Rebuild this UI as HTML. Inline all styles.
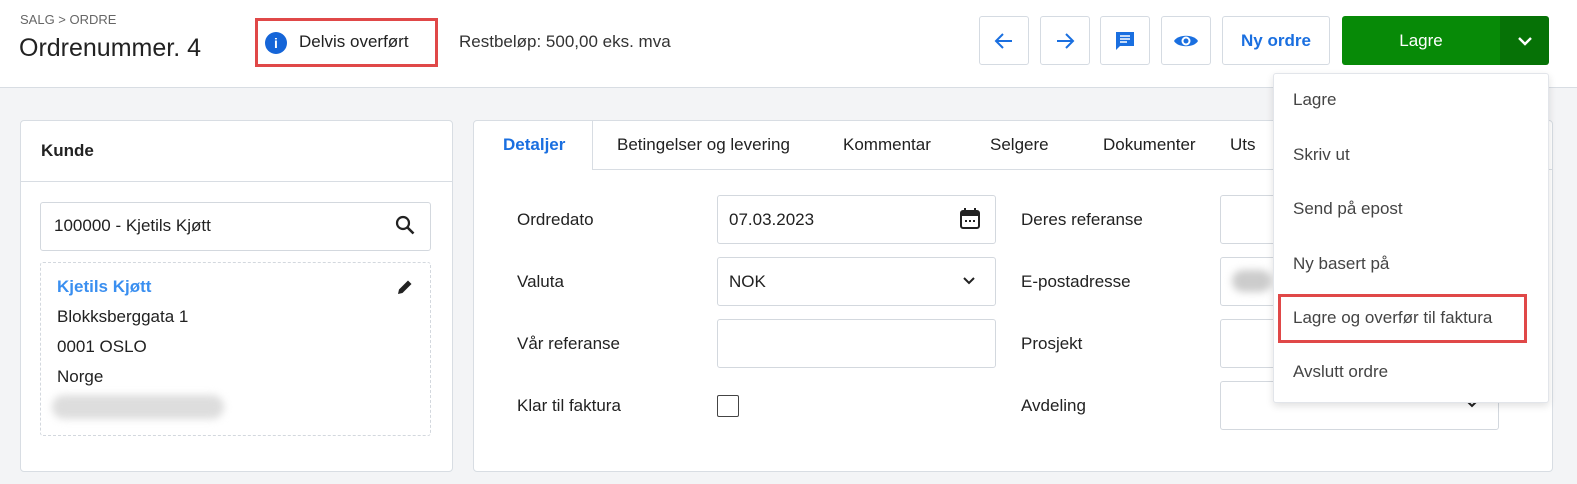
<!DOCTYPE html>
<html><head><meta charset="utf-8"><style>
*{box-sizing:border-box;margin:0;padding:0}
body{width:1577px;height:484px;background:#f3f4f6;font-family:"Liberation Sans",sans-serif;color:#212121;position:relative;overflow:hidden;font-size:17px}
.abs{position:absolute}
.hdr{left:0;top:0;width:1577px;height:88px;background:#fff;border-bottom:1px solid #d8dde3}
.btn{position:absolute;top:16px;height:49px;border:1px solid #d5dbe2;border-radius:3px;background:#fff;display:flex;align-items:center;justify-content:center}
.card{background:#fff;border:1px solid #d8dde3;border-radius:4px;position:absolute}
.inp{position:absolute;border:1px solid #d3d8de;border-radius:3px;background:#fff;height:49px}
.lbl{position:absolute;font-size:17px;color:#222}
.mi{position:absolute;left:1293px;font-size:17px;color:#444}
</style></head><body>
<div class="abs hdr"></div>
<div class="abs" style="left:20px;top:12px;font-size:13px;color:#666">SALG &gt; ORDRE</div>
<div class="abs" style="left:19px;top:34px;font-size:25px;color:#222">Ordrenummer. 4</div>
<div class="abs" style="left:255px;top:18px;width:183px;height:49px;border:3px solid #e04848"></div>
<div class="abs" style="left:265px;top:32px;width:22px;height:22px;border-radius:50%;background:#1565d8;color:#fff;font-size:14px;font-weight:bold;text-align:center;line-height:22px">i</div>
<div class="abs" style="left:299px;top:32px;font-size:17px">Delvis overført</div>
<div class="abs" style="left:459px;top:32px;font-size:17px;color:#333">Restbeløp: 500,00 eks. mva</div>

<div class="btn" style="left:979px;width:50px"><svg width="24" height="24" viewBox="0 0 24 24"><path d="M20 12H5M11 5l-7 7 7 7" stroke="#1a6fe0" stroke-width="2" fill="none"/></svg></div>
<div class="btn" style="left:1040px;width:50px"><svg width="24" height="24" viewBox="0 0 24 24"><path d="M4 12h15M13 5l7 7-7 7" stroke="#1a6fe0" stroke-width="2" fill="none"/></svg></div>
<div class="btn" style="left:1100px;width:50px"><svg width="24" height="24" viewBox="0 0 24 24"><path d="M3 3h18v14H7l-4 4z" fill="#1a6fe0"/><path d="M7 7h10M7 10h10M7 13h7" stroke="#fff" stroke-width="1.6"/></svg></div>
<div class="btn" style="left:1161px;width:50px"><svg width="26" height="24" viewBox="0 0 26 24"><path d="M1 12C5 5 21 5 25 12C21 19 5 19 1 12z" fill="#1a6fe0"/><circle cx="13" cy="12" r="4.5" fill="#fff"/><circle cx="13" cy="12" r="2.5" fill="#1a6fe0"/></svg></div>
<div class="btn" style="left:1222px;width:108px;color:#1a6fe0;font-size:17px;font-weight:bold">Ny ordre</div>
<div class="abs" style="left:1342px;top:16px;width:158px;height:49px;background:#078a07;border-radius:3px 0 0 3px;color:#fff;font-size:17px;display:flex;align-items:center;justify-content:center">Lagre</div>
<div class="abs" style="left:1500px;top:16px;width:49px;height:49px;background:#067206;border-radius:0 3px 3px 0;display:flex;align-items:center;justify-content:center"><svg width="18" height="18" viewBox="0 0 18 18"><path d="M3 6l6 6 6-6" stroke="#fff" stroke-width="2.4" fill="none"/></svg></div>

<div class="card" style="left:20px;top:120px;width:433px;height:352px">
 <div style="height:61px;border-bottom:1px solid #d8dde3;padding:20px 0 0 20px;font-size:17px;font-weight:bold;color:#222">Kunde</div>
</div>
<div class="inp" style="left:40px;top:202px;width:391px;height:49px"></div>
<div class="abs" style="left:54px;top:216px;font-size:17px">100000 - Kjetils Kjøtt</div>
<svg class="abs" style="left:393px;top:213px" width="24" height="24" viewBox="0 0 24 24"><circle cx="10" cy="10" r="6" stroke="#222" stroke-width="2.2" fill="none"/><path d="M14.5 14.5l6 6" stroke="#222" stroke-width="2.6"/></svg>
<div class="abs" style="left:40px;top:262px;width:391px;height:174px;border:1px dashed #d3d8de;border-radius:3px"></div>
<div class="abs" style="left:57px;top:277px;font-size:17px;color:#3a8ff0;font-weight:bold">Kjetils Kjøtt</div>
<svg class="abs" style="left:396px;top:278px" width="18" height="18" viewBox="0 0 18 18"><path d="M2 16l1-4.5 9-9 3.5 3.5-9 9z" fill="#222"/></svg>
<div class="abs" style="left:57px;top:307px">Blokksberggata 1</div>
<div class="abs" style="left:57px;top:337px">0001 OSLO</div>
<div class="abs" style="left:57px;top:367px">Norge</div>
<div class="abs" style="left:52px;top:395px;width:172px;height:24px;border-radius:12px;background:#ddd;filter:blur(4px)"></div>

<div class="card" style="left:473px;top:120px;width:1080px;height:352px"></div>
<div class="abs" style="left:592px;top:121px;width:960px;height:49px;border-left:1px solid #d8dde3;border-bottom:1px solid #d8dde3"></div>
<div class="abs" style="left:503px;top:135px;color:#1a6fe0;font-weight:bold;font-size:17px">Detaljer</div>
<div class="abs" style="left:617px;top:135px">Betingelser og levering</div>
<div class="abs" style="left:843px;top:135px">Kommentar</div>
<div class="abs" style="left:990px;top:135px">Selgere</div>
<div class="abs" style="left:1103px;top:135px">Dokumenter</div>
<div class="abs" style="left:1230px;top:135px">Uts</div>

<div class="lbl" style="left:517px;top:210px">Ordredato</div>
<div class="lbl" style="left:517px;top:272px">Valuta</div>
<div class="lbl" style="left:517px;top:334px">Vår referanse</div>
<div class="lbl" style="left:517px;top:396px">Klar til faktura</div>
<div class="inp" style="left:717px;top:195px;width:279px"></div>
<div class="abs" style="left:729px;top:210px">07.03.2023</div>
<svg class="abs" style="left:959px;top:207px" width="22" height="24" viewBox="0 0 22 24"><rect x="2" y="4" width="18" height="17" rx="2" stroke="#222" stroke-width="2" fill="none"/><rect x="2" y="4" width="18" height="5" fill="#222"/><path d="M6 1v5M16 1v5" stroke="#222" stroke-width="2"/><path d="M6 14h2M10 14h2M14 14h2" stroke="#222" stroke-width="2"/></svg>
<div class="inp" style="left:717px;top:257px;width:279px"></div>
<div class="abs" style="left:729px;top:272px">NOK</div>
<svg class="abs" style="left:960px;top:272px" width="18" height="18" viewBox="0 0 18 18"><path d="M4 6l5 5 5-5" stroke="#222" stroke-width="2" fill="none"/></svg>
<div class="inp" style="left:717px;top:319px;width:279px"></div>
<div class="abs" style="left:717px;top:395px;width:22px;height:22px;border:1.5px solid #444;border-radius:2px;background:#fff"></div>

<div class="lbl" style="left:1021px;top:210px">Deres referanse</div>
<div class="lbl" style="left:1021px;top:272px">E-postadresse</div>
<div class="lbl" style="left:1021px;top:334px">Prosjekt</div>
<div class="lbl" style="left:1021px;top:396px">Avdeling</div>
<div class="inp" style="left:1220px;top:195px;width:279px"></div>
<div class="inp" style="left:1220px;top:257px;width:279px"></div>
<div class="abs" style="left:1232px;top:270px;width:40px;height:22px;border-radius:11px;background:#ccc;filter:blur(4px)"></div>
<div class="inp" style="left:1220px;top:319px;width:279px"></div>
<div class="inp" style="left:1220px;top:381px;width:279px"></div>
<svg class="abs" style="left:1463px;top:395px" width="18" height="18" viewBox="0 0 18 18"><path d="M4 6l5 5 5-5" stroke="#222" stroke-width="2" fill="none"/></svg>

<div class="abs" style="left:1273px;top:73px;width:276px;height:330px;background:#fff;border:1px solid #e2e5ea;border-radius:3px;box-shadow:0 3px 8px rgba(0,0,0,0.12)"></div>
<div class="mi" style="top:90px">Lagre</div>
<div class="mi" style="top:145px">Skriv ut</div>
<div class="mi" style="top:199px">Send på epost</div>
<div class="mi" style="top:254px">Ny basert på</div>
<div class="abs" style="left:1278px;top:294px;width:249px;height:49px;border:3px solid #e04848"></div>
<div class="mi" style="top:308px">Lagre og overfør til faktura</div>
<div class="mi" style="top:362px">Avslutt ordre</div>
</body></html>
